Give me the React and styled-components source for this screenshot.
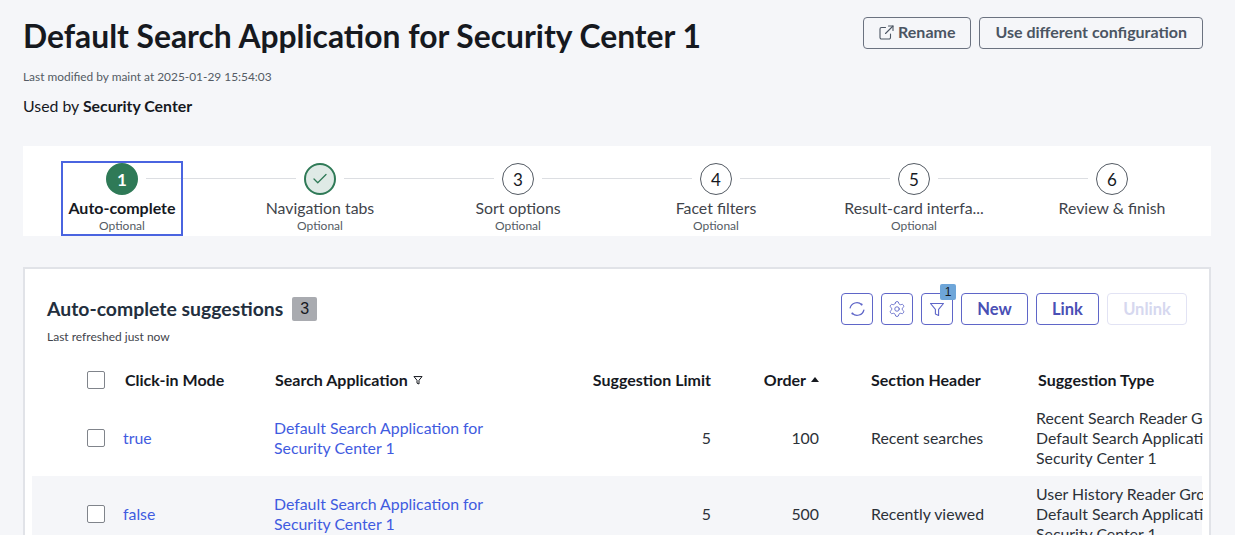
import React from 'react';
import styled, { createGlobalStyle } from 'styled-components';
import { Settings, Check } from 'lucide-react';

const GlobalStyle = createGlobalStyle`
  html, body {
    margin: 0;
    height: 535px;
    overflow: hidden;
    background: #f5f6f9;
    font-family: Lato, "Liberation Sans", sans-serif;
    color: #16191f;
  }
`;

const Page = styled.div`
  padding: 17px 24px 0 23px;
  height: 518px;
  overflow: hidden;
`;

const TopRow = styled.div`
  display: flex;
  justify-content: space-between;
  align-items: flex-start;
  padding-right: 8px;
`;

const Title = styled.h1`
  margin: 0;
  font-size: 31.8px;
  line-height: 38px;
  font-weight: 700;
`;

const TopActions = styled.div`
  display: flex;
  gap: 8px;
`;

const OutlineButton = styled.button`
  height: 32px;
  padding: 0 15px 4px;
  display: flex;
  align-items: center;
  gap: 4px;
  background: transparent;
  border: 1px solid #6b7280;
  border-radius: 4px;
  color: #4b5563;
  font: 700 16px Lato, sans-serif;
`;

const Modified = styled.div`
  margin-top: 14px;
  font-size: 11.9px;
  line-height: 16px;
  color: #545b64;
`;

const UsedBy = styled.div`
  margin-top: 11px;
  font-size: 15.85px;
  line-height: 20px;
  b {
    font-weight: 700;
  }
`;

const Stepper = styled.div`
  margin-top: 30px;
  height: 90px;
  display: grid;
  grid-template-columns: repeat(6, 198px);
  background: #fff;
`;

const Step = styled.div`
  position: relative;
  display: flex;
  flex-direction: column;
  align-items: center;
  padding-top: 17px;
`;

const Connector = styled.span`
  position: absolute;
  top: 32px;
  left: calc(50% + 24px);
  width: 150px;
  height: 1px;
  background: #dcdee2;
`;

const Circle = styled.span`
  width: 32px;
  height: 32px;
  box-sizing: border-box;
  border-radius: 50%;
  display: flex;
  align-items: center;
  justify-content: center;
  font-size: 17px;
  border: ${p => (p.$state === 'todo' ? '1px solid #545b64' : '2px solid #2f7a57')};
  background: ${p =>
    p.$state === 'current' ? '#2f7a57' : p.$state === 'done' ? '#dfeae6' : '#fff'};
  color: ${p => (p.$state === 'current' ? '#fff' : p.$state === 'done' ? '#2f7a57' : '#16191f')};
  font-weight: ${p => (p.$state === 'current' ? 700 : 400)};
`;

const StepLabel = styled.div`
  margin-top: 2px;
  font-size: ${p => (p.$active ? 16 : 15.85)}px;
  line-height: 21px;
  font-weight: ${p => (p.$active ? 700 : 400)};
  color: ${p => (p.$active ? '#16191f' : '#3f444b')};
`;

const StepHint = styled.div`
  font-size: 12px;
  line-height: 15px;
  color: #545b64;
`;

const FocusRing = styled.span`
  position: absolute;
  top: 15px;
  left: 38px;
  width: 122px;
  height: 75px;
  box-sizing: border-box;
  border: 2px solid #4a64e0;
  pointer-events: none;
`;

const Card = styled.section`
  margin-top: 31px;
  background: #fff;
  border: 2px solid #e1e3e8;
  border-bottom: 0;
  box-sizing: border-box;
  width: 1188px;
  height: 271px;
  padding: 0 7px;
  overflow: hidden;
`;

const CardHead = styled.div`
  display: flex;
  justify-content: space-between;
  padding: 24px 15px 0 15px;
`;

const CardTitle = styled.div`
  display: flex;
  align-items: center;
  gap: 9px;
  height: 32px;
  margin-top: -1px;
  font-size: 19.4px;
  font-weight: 700;
  color: #232f3e;
`;

const Count = styled.span`
  width: 25px;
  height: 24px;
  margin-top: 2px;
  border-radius: 2px;
  background: #a9abb0;
  display: flex;
  align-items: center;
  justify-content: center;
  font: 400 16px "Liberation Sans", sans-serif;
  color: #16191f;
`;

const Refreshed = styled.div`
  margin-top: 5px;
  font-size: 12px;
  line-height: 16px;
  color: #3f444b;
`;

const Toolbar = styled.div`
  display: flex;
  gap: 8px;
`;

const IconButton = styled.button`
  position: relative;
  width: 32px;
  height: 32px;
  padding: 0;
  display: flex;
  align-items: center;
  justify-content: center;
  background: #fff;
  border: 1px solid #5f66c8;
  border-radius: 4px;
  color: #5f66c8;
`;

const TextButton = styled.button`
  height: 32px;
  width: ${p => p.$width}px;
  padding: 0;
  background: #fff;
  border: 1px solid ${p => (p.disabled ? '#e2e3f4' : '#5f66c8')};
  border-radius: 4px;
  color: ${p => (p.disabled ? '#d6d8ef' : '#4a50b5')};
  font: 700 16.5px Lato, sans-serif;
`;

const FilterBadge = styled.span`
  position: absolute;
  top: -10px;
  right: -4px;
  width: 16px;
  height: 16px;
  border-radius: 2px;
  background: #6ea6d9;
  color: #16191f;
  font: 400 12px/16px "Liberation Sans", sans-serif;
  text-align: center;
`;

const Row = styled.div`
  display: grid;
  grid-template-columns: 91px 151px 246px 191px 108px 217px 167px;
  align-items: center;
  background: ${p => (p.$striped ? '#f5f6f9' : 'transparent')};
  height: ${p => p.$height}px;
  font-size: 15.85px;
  line-height: 20px;
  color: #2c3138;
`;

const HeadRow = styled(Row)`
  margin-top: 15px;
  font-size: 16px;
  font-weight: 700;
  color: #16191f;
`;

const Box = styled.span`
  display: block;
  width: 16px;
  height: 16px;
  margin-left: 55px;
  border: 1px solid #80848b;
  border-radius: 2px;
  background: #fff;
`;

const HeadLabel = styled.div`
  display: flex;
  align-items: center;
  gap: 5px;
  padding-left: ${p => p.$indent || 0}px;
  justify-content: ${p => (p.$right ? 'flex-end' : 'flex-start')};
`;

const Link = styled.a`
  color: #3f5be0;
  text-decoration: none;
`;

const NumberCell = styled.div`
  text-align: right;
`;

const SectionCell = styled.div`
  padding-left: 52px;
`;

const TypeCell = styled.div`
  overflow: hidden;
  white-space: nowrap;
`;

const SortUp = styled.span`
  width: 0;
  height: 0;
  border-left: 4px solid transparent;
  border-right: 4px solid transparent;
  border-bottom: 5px solid #16191f;
  margin-bottom: 2px;
`;

const OpenSvg = styled.svg`
  margin-top: 2px;
`;

const FunnelIcon = ({ size = 16 }) => (
  <svg width={size} height={size} viewBox="0 0 16 16" fill="none" stroke="currentColor" strokeWidth={size < 14 ? 1.6 : 1.1} strokeLinejoin="round">
    <path d="M1.5 2.5h13L9.6 8.4v6L6.4 13V8.4z" />
  </svg>
);

const RefreshIcon = () => (
  <svg width="18" height="18" viewBox="0 0 18 18" fill="none" stroke="currentColor" strokeWidth="1.2" strokeLinecap="round">
    <path d="M2.1 8A7 7 0 0 1 13.6 4.5" />
    <path d="M15.9 10A7 7 0 0 1 4.4 13.5" />
    <circle cx="13.6" cy="4.5" r="1" fill="currentColor" stroke="none" />
    <circle cx="4.4" cy="13.5" r="1" fill="currentColor" stroke="none" />
  </svg>
);

const OpenIcon = () => (
  <OpenSvg width="15" height="15" viewBox="0 0 15 15" fill="none" stroke="currentColor" strokeWidth="1.1" strokeLinecap="round" strokeLinejoin="round">
    <path d="M6.5 2.5H2.5a1.5 1.5 0 0 0-1.5 1.5v8.5A1.5 1.5 0 0 0 2.5 14H10a1.5 1.5 0 0 0 1.5-1.5V9" />
    <path d="M9.5 1h4.5v4.5" />
    <path d="M14 1L6.5 8.5" />
  </OpenSvg>
);

const steps = [
  { n: 1, label: 'Auto-complete', state: 'current' },
  { n: 2, label: 'Navigation tabs', state: 'done' },
  { n: 3, label: 'Sort options', state: 'todo' },
  { n: 4, label: 'Facet filters', state: 'todo' },
  { n: 5, label: 'Result-card interfa...', state: 'todo' },
  { n: 6, label: 'Review & finish', state: 'todo', last: true },
];

const rows = [
  {
    mode: 'true',
    order: 100,
    section: 'Recent searches',
    type: ['Recent Search Reader Group', 'Default Search Application for', 'Security Center 1'],
  },
  {
    mode: 'false',
    order: 500,
    section: 'Recently viewed',
    type: ['User History Reader Group', 'Default Search Application for', 'Security Center 1'],
    striped: true,
  },
];

export default function App() {
  return (
    <Page>
      <GlobalStyle />
      <TopRow>
        <Title>Default Search Application for Security Center 1</Title>
        <TopActions>
          <OutlineButton>
            <OpenIcon />
            Rename
          </OutlineButton>
          <OutlineButton>Use different configuration</OutlineButton>
        </TopActions>
      </TopRow>
      <Modified>Last modified by maint at 2025-01-29 15:54:03</Modified>
      <UsedBy>
        Used by <b>Security Center</b>
      </UsedBy>

      <Stepper>
        {steps.map(s => (
          <Step key={s.n}>
            <Circle $state={s.state}>
              {s.state === 'done' ? <Check size={18} strokeWidth={1.75} /> : s.n}
            </Circle>
            <StepLabel $active={s.state === 'current'}>{s.label}</StepLabel>
            {!s.last && <StepHint>Optional</StepHint>}
            {!s.last && <Connector />}
            {s.state === 'current' && <FocusRing />}
          </Step>
        ))}
      </Stepper>

      <Card>
        <CardHead>
          <div>
            <CardTitle>
              Auto-complete suggestions <Count>3</Count>
            </CardTitle>
            <Refreshed>Last refreshed just now</Refreshed>
          </div>
          <Toolbar>
            <IconButton>
              <RefreshIcon />
            </IconButton>
            <IconButton>
              <Settings size={18} strokeWidth={1.2} />
            </IconButton>
            <IconButton>
              <FunnelIcon />
              <FilterBadge>1</FilterBadge>
            </IconButton>
            <TextButton $width={67}>New</TextButton>
            <TextButton $width={63}>Link</TextButton>
            <TextButton $width={80} disabled>
              Unlink
            </TextButton>
          </Toolbar>
        </CardHead>

        <HeadRow $height={40}>
          <Box />
          <HeadLabel $indent={2}>Click-in Mode</HeadLabel>
          <HeadLabel $indent={1}>
            Search Application <FunnelIcon size={10} />
          </HeadLabel>
          <HeadLabel $right>Suggestion Limit</HeadLabel>
          <HeadLabel $right>
            Order <SortUp />
          </HeadLabel>
          <HeadLabel $indent={52}>Section Header</HeadLabel>
          <HeadLabel $indent={2}>Suggestion Type</HeadLabel>
        </HeadRow>

        {rows.map(r => (
          <Row key={r.mode} $striped={r.striped} $height={76}>
            <Box />
            <div>
              <Link>{r.mode}</Link>
            </div>
            <Link>
              Default Search Application for
              <br />
              Security Center 1
            </Link>
            <NumberCell>5</NumberCell>
            <NumberCell>{r.order}</NumberCell>
            <SectionCell>{r.section}</SectionCell>
            <TypeCell>
              {r.type.map(line => (
                <div key={line}>{line}</div>
              ))}
            </TypeCell>
          </Row>
        ))}
      </Card>
    </Page>
  );
}
